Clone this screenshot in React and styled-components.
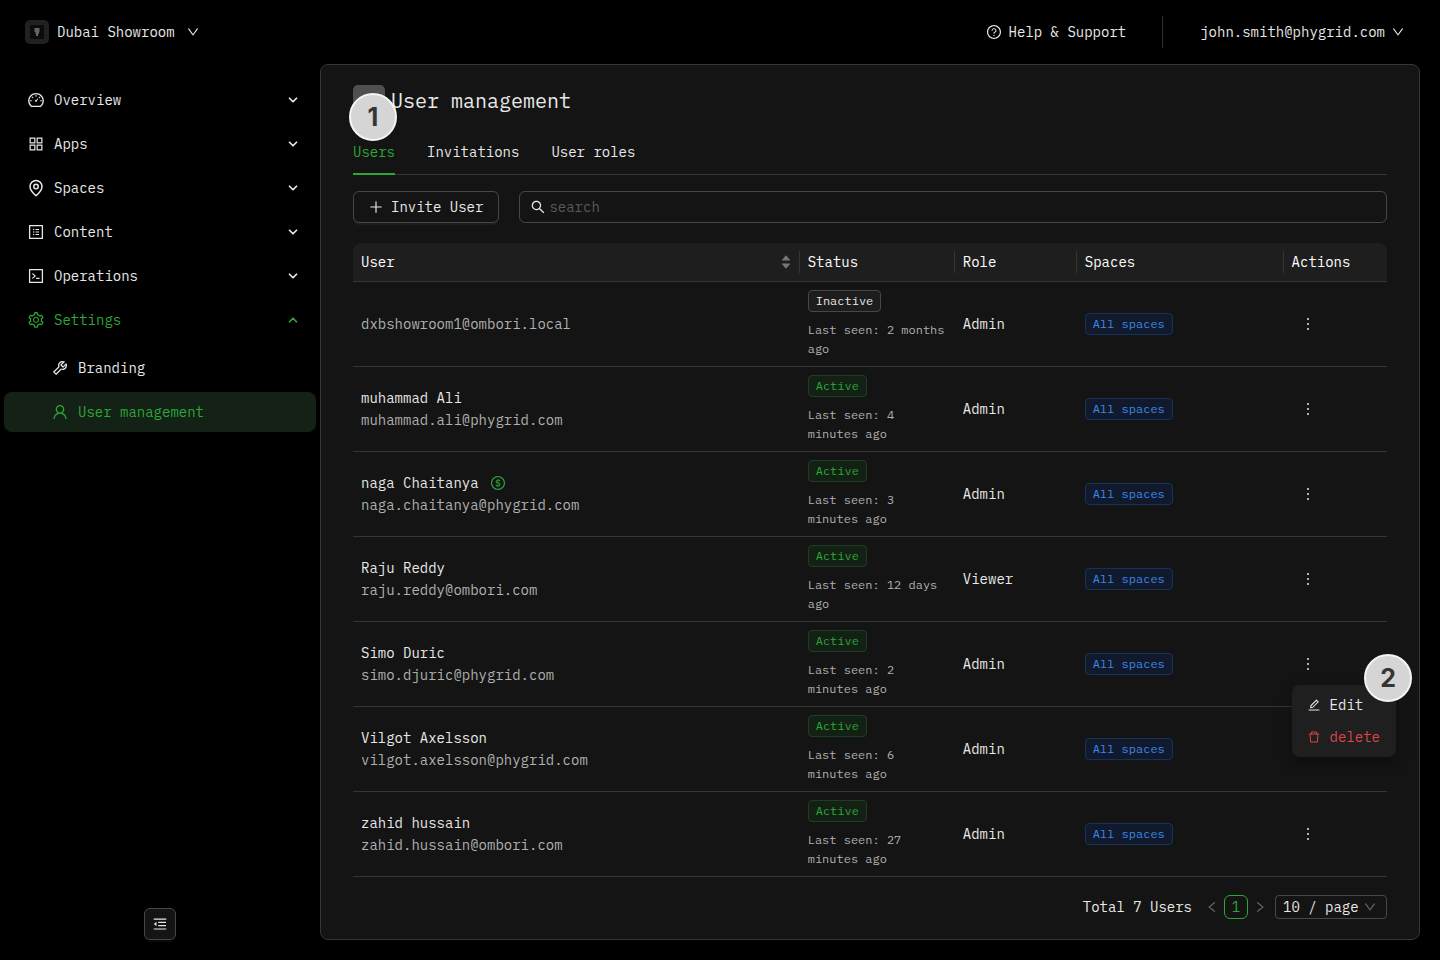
import React, { useState } from 'react'

import styled, { createGlobalStyle } from 'styled-components'

import {
  AiFillCaretDown,
  AiFillCaretUp,
  AiOutlineAppstore,
  AiOutlineCode,
  AiOutlineDashboard,
  AiOutlineDelete,
  AiOutlineDollar,
  AiOutlineDown,
  AiOutlineEdit,
  AiOutlineLeft,
  AiOutlineMenuFold,
  AiOutlineMore,
  AiOutlinePlus,
  AiOutlineProfile,
  AiOutlineQuestionCircle,
  AiOutlineRight,
  AiOutlineSearch,
  AiOutlineSetting,
  AiOutlineTool,
  AiOutlineUser,
} from 'react-icons/ai'
import { ChevronDown, ChevronUp, MapPin } from 'lucide-react'

const GREEN = '#2da637'
const PANEL = '#141414'
const RAISED = '#1e1e1e'
const LINE = '#343634'
const CONTROL = '#464846'

const GlobalStyle = createGlobalStyle`
  * {
    box-sizing: border-box;
  }
  body {
    margin: 0;
    background: #000;
    color: #e8e8e8;
    font-family: "IBM Plex Mono", "Liberation Mono", monospace;
    font-size: 14px;
    line-height: 22px;
  }
  button, input, select {
    margin: 0;
    font: inherit;
    color: inherit;
  }
  button {
    padding: 0;
    border: 0;
    background: none;
    cursor: pointer;
  }
  a {
    color: inherit;
    text-decoration: none;
  }
  svg {
    display: block;
    flex: none;
  }
`

const Page = styled.div`
  display: flex;
  flex-direction: column;
  min-height: 100vh;
`

const Header = styled.header`
  display: flex;
  align-items: center;
  height: 64px;
  padding: 0 35px 0 25px;
`

const SpaceSwitch = styled.button`
  display: flex;
  align-items: center;
  margin-right: auto;
  > svg {
    margin-left: 11px;
  }
`

const Logo = styled.span`
  display: flex;
  align-items: center;
  justify-content: center;
  width: 24px;
  height: 24px;
  margin-right: 8px;
  border-radius: 5px;
  background: #212121;
`

const HelpLink = styled.a`
  display: flex;
  align-items: center;
  gap: 7px;
`

const Divider = styled.span`
  width: 1px;
  height: 32px;
  margin: 0 37px 0 36px;
  background: #303030;
`

const Account = styled.button`
  display: flex;
  align-items: center;
  gap: 6px;
`

const Body = styled.div`
  display: flex;
  flex: 1;
  padding: 0 20px 20px 0;
`

const Sidebar = styled.aside`
  display: flex;
  flex-direction: column;
  justify-content: space-between;
  align-items: center;
  width: 320px;
  flex: none;
  padding-top: 12px;
`

const Menu = styled.nav`
  display: flex;
  flex-direction: column;
  gap: 4px;
  width: 100%;
  padding: 4px;
`

const MenuItem = styled.a`
  display: flex;
  align-items: center;
  gap: 9px;
  height: 40px;
  padding: 0 16px 0 ${({ $nested }) => ($nested ? '47px' : '23px')};
  border-radius: 8px;
  color: ${({ $green }) => ($green ? GREEN : 'inherit')};
  background: ${({ $selected }) => ($selected ? '#132116' : 'none')};
  span {
    flex: 1;
  }
`

const SubMenu = styled.div`
  display: flex;
  flex-direction: column;
  gap: 4px;
  padding-top: 4px;
`

const CollapseButton = styled.button`
  display: flex;
  align-items: center;
  justify-content: center;
  width: 32px;
  height: 32px;
  border: 1px solid ${CONTROL};
  border-radius: 6px;
  background: ${PANEL};
  box-shadow: 0 2px 0 rgba(255, 255, 255, 0.04);
`

const Panel = styled.main`
  flex: 1;
  min-width: 0;
  padding: 20px 32px;
  border: 1px solid ${LINE};
  border-radius: 8px;
  background: ${PANEL};
`

const TitleRow = styled.div`
  display: flex;
  align-items: center;
  gap: 6px;
`

const TitleIcon = styled.span`
  position: relative;
  width: 32px;
  height: 32px;
  border-radius: 5px;
  background: #505050;
`

const Title = styled.h1`
  margin: 0;
  font-size: 20px;
  line-height: 32px;
  font-weight: 400;
`

const Marker = styled.span`
  position: absolute;
  top: ${({ $top }) => $top};
  left: ${({ $left }) => $left};
  right: ${({ $right }) => $right};
  display: flex;
  align-items: center;
  justify-content: center;
  width: 48px;
  height: 48px;
  border: 2px solid #f4f4f4;
  border-radius: 50%;
  background: #d5d5d5;
  color: #343634;
  font-family: Inter, "Liberation Sans", sans-serif;
  font-size: 25px;
  font-weight: 700;
`

const Tabs = styled.div`
  display: flex;
  gap: 32px;
  margin-top: 12px;
  border-bottom: 1px solid ${LINE};
`

const Tab = styled.button`
  height: 46px;
  margin-bottom: -1px;
  padding-top: 2px;
  border-bottom: 2px solid ${({ $active }) => ($active ? GREEN : 'transparent')};
  color: ${({ $active }) => ($active ? GREEN : 'inherit')};
`

const Toolbar = styled.div`
  display: flex;
  gap: 20px;
  margin: 16px 0 20px;
`

const InviteButton = styled.button`
  display: flex;
  align-items: center;
  gap: 7px;
  height: 32px;
  padding: 0 15px 0 14px;
  border: 1px solid ${CONTROL};
  border-radius: 6px;
  box-shadow: 0 2px 0 rgba(255, 255, 255, 0.04);
`

const Search = styled.label`
  display: flex;
  flex: 1;
  align-items: center;
  gap: 3px;
  height: 32px;
  padding: 0 10px;
  border: 1px solid ${CONTROL};
  border-radius: 6px;
  input {
    flex: 1;
    min-width: 0;
    padding: 0;
    border: 0;
    outline: 0;
    background: none;
  }
  input::placeholder {
    color: #5a5a5a;
  }
`

const Table = styled.table`
  width: 100%;
  table-layout: fixed;
  border-collapse: separate;
  border-spacing: 0;
  th, td {
    padding: 8px;
    border-bottom: 1px solid ${LINE};
    text-align: left;
  }
  th {
    background: ${RAISED};
    font-weight: 400;
    color: #fff;
  }
  th:first-child {
    border-top-left-radius: 8px;
  }
  th:last-child {
    border-top-right-radius: 8px;
  }
`

const HeadCell = styled.th`
  width: ${({ $width }) => $width};
`

// the rule between two heading cells is shorter than the cell
const HeadLabel = styled.div`
  display: flex;
  align-items: center;
  justify-content: space-between;
  margin-right: -8px;
  padding-right: 7px;
  border-right: 1px solid ${({ $last }) => ($last ? 'transparent' : LINE)};
`

const Sorter = styled.button`
  display: flex;
  flex-direction: column;
  color: #777;
  svg + svg {
    margin-top: -4px;
  }
`

const UserName = styled.div`
  display: flex;
  align-items: center;
  gap: 11px;
  svg {
    color: ${GREEN};
  }
`

const Email = styled.div`
  color: #b0b0b0;
`

const tones = {
  grey: ['#e8e8e8', '#1d1d1d', '#464846'],
  green: [GREEN, '#132114', '#203c24'],
  blue: ['#3c89e8', '#111a2c', '#15325b'],
}

const Tag = styled.span`
  display: block;
  width: fit-content;
  padding: 0 7px;
  border: 1px solid ${({ $tone }) => tones[$tone][2]};
  border-radius: 4px;
  background: ${({ $tone }) => tones[$tone][1]};
  color: ${({ $tone }) => tones[$tone][0]};
  font-size: 12px;
  line-height: 20px;
`

const LastSeen = styled.div`
  margin-top: 8px;
  color: #b0b0b0;
  font-size: 12px;
  line-height: 19px;
`

const ActionBox = styled.div`
  position: relative;
  width: 32px;
`

const MoreButton = styled.button`
  display: flex;
  align-items: center;
  justify-content: center;
  width: 32px;
  height: 32px;
`

const Dropdown = styled.div`
  position: absolute;
  z-index: 1;
  top: 37px;
  left: 0;
  padding: 4px;
  border-radius: 8px;
  background: #1f1f1f;
  box-shadow: 0 6px 12px rgba(0, 0, 0, 0.35);
`

const DropdownItem = styled.button`
  display: flex;
  align-items: center;
  gap: 9px;
  height: 32px;
  padding: 0 12px 0 11px;
  color: ${({ $danger }) => ($danger ? '#dc4446' : 'inherit')};
`

const Pagination = styled.div`
  display: flex;
  align-items: center;
  justify-content: flex-end;
  margin-top: 18px;
`

const PageButton = styled.button`
  display: flex;
  align-items: center;
  justify-content: center;
  width: 24px;
  height: 24px;
  color: #6a6a6a;
`

const CurrentPage = styled(PageButton)`
  border: 1px solid ${GREEN};
  border-radius: 6px;
  color: ${GREEN};
`

const Total = styled.span`
  margin-right: 8px;
`

const PageSize = styled.label`
  display: grid;
  align-items: center;
  width: 112px;
  height: 24px;
  margin-left: 3px;
  border: 1px solid ${CONTROL};
  border-radius: 4px;
  select, svg {
    grid-area: 1 / 1;
  }
  select {
    width: 100%;
    padding: 0 7px;
    border: 0;
    outline: 0;
    appearance: none;
    background: transparent;
  }
  option {
    background: ${RAISED};
  }
  svg {
    justify-self: end;
    margin-right: 9px;
    color: #6a6a6a;
    pointer-events: none;
  }
`

const menu = [
  { label: 'Overview', icon: AiOutlineDashboard },
  { label: 'Apps', icon: AiOutlineAppstore },
  { label: 'Spaces', icon: MapPin },
  { label: 'Content', icon: AiOutlineProfile },
  { label: 'Operations', icon: AiOutlineCode },
]

const users = [
  { email: 'dxbshowroom1@ombori.local', seen: '2 months ago', role: 'Admin', inactive: true },
  { name: 'muhammad Ali', email: 'muhammad.ali@phygrid.com', seen: '4 minutes ago', role: 'Admin' },
  { name: 'naga Chaitanya', email: 'naga.chaitanya@phygrid.com', seen: '3 minutes ago', role: 'Admin', billing: true },
  { name: 'Raju Reddy', email: 'raju.reddy@ombori.com', seen: '12 days ago', role: 'Viewer' },
  { name: 'Simo Duric', email: 'simo.djuric@phygrid.com', seen: '2 minutes ago', role: 'Admin' },
  { name: 'Vilgot Axelsson', email: 'vilgot.axelsson@phygrid.com', seen: '6 minutes ago', role: 'Admin' },
  { name: 'zahid hussain', email: 'zahid.hussain@ombori.com', seen: '27 minutes ago', role: 'Admin' },
]

const App = () => {

  const [tab, setTab] = useState('Users')
  const [search, setSearch] = useState('')
  const [openMenu, setOpenMenu] = useState('simo.djuric@phygrid.com')

  const toggleMenu = email => {
    setOpenMenu(openMenu === email ? null : email)
  }

  return (
    <Page>
      <GlobalStyle />
      <Header>
        <SpaceSwitch>
          <Logo>
            <svg width="14" height="14" viewBox="0 0 14 14">
              <rect width="14" height="14" fill="#0c0c0c" />
              <path d="M4.5 4h5M4.5 6h5M5.5 8h3.5M6 10h2" stroke="#bdbdbd" fill="none" />
            </svg>
          </Logo>
          Dubai Showroom
          <AiOutlineDown size={14} />
        </SpaceSwitch>
        <HelpLink href="#help">
          <AiOutlineQuestionCircle size={16} />
          Help &amp; Support
        </HelpLink>
        <Divider />
        <Account>
          john.smith@phygrid.com
          <AiOutlineDown size={14} />
        </Account>
      </Header>

      <Body>
        <Sidebar>
          <Menu>
            {menu.map(({ label, icon: Icon }) => (
              <MenuItem key={label} href={`#${label.toLowerCase()}`}>
                <Icon size={18} />
                <span>{label}</span>
                <ChevronDown size={14} strokeWidth={3} />
              </MenuItem>
            ))}
            <MenuItem href="#settings" $green>
              <AiOutlineSetting size={18} />
              <span>Settings</span>
              <ChevronUp size={14} strokeWidth={3} />
            </MenuItem>
            <SubMenu>
              <MenuItem href="#branding" $nested>
                <AiOutlineTool size={18} />
                <span>Branding</span>
              </MenuItem>
              <MenuItem href="#users" $nested $green $selected>
                <AiOutlineUser size={18} />
                <span>User management</span>
              </MenuItem>
            </SubMenu>
          </Menu>
          <CollapseButton aria-label="Collapse menu">
            <AiOutlineMenuFold size={16} />
          </CollapseButton>
        </Sidebar>

        <Panel>
          <TitleRow>
            <TitleIcon>
              <Marker $top="8px" $left="-4px">1</Marker>
            </TitleIcon>
            <Title>User management</Title>
          </TitleRow>

          <Tabs>
            {['Users', 'Invitations', 'User roles'].map(name => (
              <Tab key={name} $active={tab === name} onClick={() => setTab(name)}>{name}</Tab>
            ))}
          </Tabs>

          <Toolbar>
            <InviteButton>
              <AiOutlinePlus size={16} />
              Invite User
            </InviteButton>
            <Search htmlFor="search">
              <AiOutlineSearch size={16} />
              <input
                id="search"
                type="text"
                placeholder="search"
                value={search}
                onChange={e => setSearch(e.target.value)}
              />
            </Search>
          </Toolbar>

          <Table>
            <thead>
              <tr>
                <HeadCell>
                  <HeadLabel>
                    User
                    <Sorter aria-label="Sort by user">
                      <AiFillCaretUp size={12} />
                      <AiFillCaretDown size={12} />
                    </Sorter>
                  </HeadLabel>
                </HeadCell>
                <HeadCell $width="15%"><HeadLabel>Status</HeadLabel></HeadCell>
                <HeadCell $width="122px"><HeadLabel>Role</HeadLabel></HeadCell>
                <HeadCell $width="20%"><HeadLabel>Spaces</HeadLabel></HeadCell>
                <HeadCell $width="10%"><HeadLabel $last>Actions</HeadLabel></HeadCell>
              </tr>
            </thead>
            <tbody>
              {users.map(user => (
                <tr key={user.email}>
                  <td>
                    {user.name && (
                      <UserName>
                        {user.name}
                        {user.billing && <AiOutlineDollar size={16} />}
                      </UserName>
                    )}
                    <Email>{user.email}</Email>
                  </td>
                  <td>
                    <Tag $tone={user.inactive ? 'grey' : 'green'}>{user.inactive ? 'Inactive' : 'Active'}</Tag>
                    <LastSeen>{`Last seen: ${user.seen}`}</LastSeen>
                  </td>
                  <td>{user.role}</td>
                  <td><Tag $tone="blue">All spaces</Tag></td>
                  <td>
                    <ActionBox>
                      <MoreButton aria-label="Actions" onClick={() => toggleMenu(user.email)}>
                        <AiOutlineMore size={18} />
                      </MoreButton>
                      {openMenu === user.email && (
                        <Dropdown>
                          <DropdownItem>
                            <AiOutlineEdit size={14} />
                            Edit
                          </DropdownItem>
                          <DropdownItem $danger>
                            <AiOutlineDelete size={14} />
                            delete
                          </DropdownItem>
                          <Marker $top="-31px" $right="-16px">2</Marker>
                        </Dropdown>
                      )}
                    </ActionBox>
                  </td>
                </tr>
              ))}
            </tbody>
          </Table>

          <Pagination>
            <Total>Total 7 Users</Total>
            <PageButton aria-label="Previous page"><AiOutlineLeft size={14} /></PageButton>
            <CurrentPage>1</CurrentPage>
            <PageButton aria-label="Next page"><AiOutlineRight size={14} /></PageButton>
            <PageSize htmlFor="page-size">
              <select id="page-size" aria-label="Page size">
                <option>10 / page</option>
                <option>20 / page</option>
                <option>50 / page</option>
              </select>
              <AiOutlineDown size={14} />
            </PageSize>
          </Pagination>
        </Panel>
      </Body>
    </Page>
  )
}

export default App
